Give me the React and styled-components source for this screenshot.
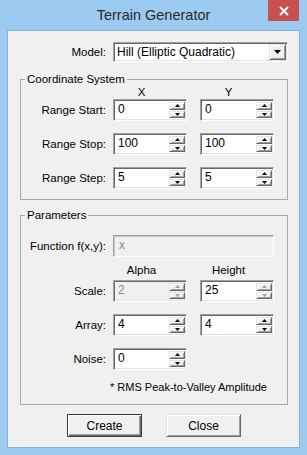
import React from 'react'
import styled, { createGlobalStyle, css } from 'styled-components'

const GlobalStyle = createGlobalStyle`
  html, body {
    margin: 0;
    padding: 0;
    background: #9ccaf1;
  }
  body {
    font-family: "Liberation Sans", Arial, sans-serif;
    font-size: 11.5px;
    color: #000;
  }
`

const sunken = css`
  border: 1px solid;
  border-color: #a0a0a0 #ffffff #ffffff #a0a0a0;
  box-shadow: inset 1px 1px 0 #696969, inset -1px -1px 0 #e3e3e3;
`

const raised = css`
  border: 1px solid;
  border-color: #e3e3e3 #696969 #696969 #e3e3e3;
  box-shadow: inset 1px 1px 0 #ffffff, inset -1px -1px 0 #a0a0a0;
  background: #f0f0f0;
`

const Arrow = ({ up, muted }) => (
  <svg width="5" height="3" viewBox="0 0 5 3">
    <polygon points={up ? '2.5,0 5,3 0,3' : '0,0 5,0 2.5,3'} fill={muted ? '#a0a0a0' : '#000'} />
  </svg>
)

const SpinBox = ({ value, disabled, lockArrows }) => (
  <Field $disabled={disabled}>
    <Value $disabled={disabled}>{value}</Value>
    <Spin>
      <SpinBtn>
        <Arrow up muted={disabled || lockArrows} />
      </SpinBtn>
      <SpinBtn>
        <Arrow muted={disabled || lockArrows} />
      </SpinBtn>
    </Spin>
  </Field>
)

const Row = ({ label, x, y }) => (
  <Cols>
    <Label>{label}</Label>
    <SpinBox {...x} />
    <SpinBox {...y} />
  </Cols>
)

const App = () => {
  return (
    <>
      <GlobalStyle />
      <Window>
        <TitleBar>
          <Title>Terrain Generator</Title>
          <CloseButton>
            <svg width="10" height="10" viewBox="0 0 10 10">
              <path d="M1 1 L9 9 M9 1 L1 9" stroke="#fff" strokeWidth="2" />
            </svg>
          </CloseButton>
        </TitleBar>

        <Client>
          <ModelRow>
            <Label>Model:</Label>
            <Combo>
              <ComboText>Hill (Elliptic Quadratic)</ComboText>
              <DropBtn>
                <svg width="7" height="4" viewBox="0 0 7 4">
                  <polygon points="0,0 7,0 3.5,4" fill="#000" />
                </svg>
              </DropBtn>
            </Combo>
          </ModelRow>

          <Group>
            <Legend>Coordinate System</Legend>
            <Cols>
              <span />
              <Head>X</Head>
              <Head>Y</Head>
            </Cols>
            <Rows>
              <Row label="Range Start:" x={{ value: '0' }} y={{ value: '0' }} />
              <Row label="Range Stop:" x={{ value: '100' }} y={{ value: '100' }} />
              <Row label="Range Step:" x={{ value: '5' }} y={{ value: '5' }} />
            </Rows>
          </Group>

          <Group $gap>
            <Legend>Parameters</Legend>
            <FuncRow>
              <Label>Function f(x,y):</Label>
              <TextField $disabled>x</TextField>
            </FuncRow>
            <Cols $top={7}>
              <span />
              <Head>Alpha</Head>
              <Head>Height</Head>
            </Cols>
            <Rows $top={3}>
              <Row label="Scale:" x={{ value: '2', disabled: true }} y={{ value: '25', lockArrows: true }} />
              <Row label="Array:" x={{ value: '4' }} y={{ value: '4' }} />
              <Cols>
                <Label>Noise:</Label>
                <SpinBox value="0" />
              </Cols>
            </Rows>
            <Note>* RMS Peak-to-Valley Amplitude</Note>
          </Group>

          <Buttons>
            <Button $default>Create</Button>
            <Button>Close</Button>
          </Buttons>
        </Client>
      </Window>
    </>
  )
}

export default App

const Window = styled.div`
  width: 307px;
  height: 455px;
  box-sizing: border-box;
  padding: 0 8px 8px;
  display: flex;
  flex-direction: column;
  background: #9ccaf1;
`

const TitleBar = styled.div`
  position: relative;
  height: 31px;
  display: flex;
  align-items: center;
  justify-content: center;
`

const Title = styled.div`
  font-size: 14.5px;
  color: #2b2b2b;
  margin-top: -1px;
`

const CloseButton = styled.div`
  position: absolute;
  top: 0;
  right: 0;
  width: 31px;
  height: 21px;
  background: #c75050;
  display: flex;
  align-items: center;
  justify-content: center;
`

const Client = styled.div`
  flex: 1;
  background: #f0f0f0;
  box-shadow: 0 0 0 1px #86b3da;
  padding: 11px 11px 0 12px;
  display: flex;
  flex-direction: column;
`

const Label = styled.div`
  text-align: right;
  white-space: nowrap;
`

const ModelRow = styled.div`
  display: grid;
  grid-template-columns: 86px 175px;
  column-gap: 7px;
  align-items: center;
  margin-bottom: 10px;
`

const Combo = styled.div`
  ${sunken};
  box-sizing: border-box;
  height: 20px;
  background: #fff;
  display: flex;
  align-items: center;
  padding: 0 1px 0 3px;
`

const ComboText = styled.div`
  flex: 1;
  font-size: 12px;
`

const DropBtn = styled.div`
  ${raised};
  box-sizing: border-box;
  width: 17px;
  height: 16px;
  display: flex;
  align-items: center;
  justify-content: center;
`

const Group = styled.fieldset`
  margin: ${(p) => (p.$gap ? '8px' : '0')} 0 0;
  padding: 0 0 10px;
  border: 1px solid #a9a9a9;
  min-width: 0;
  width: 268px;
  box-sizing: border-box;
`

const Legend = styled.legend`
  margin-left: 4px;
  padding: 0 2px;
  line-height: 14px;
`

const Cols = styled.div`
  display: grid;
  grid-template-columns: 85px 80px 74px;
  column-gap: 7px;
  align-items: center;
  margin-top: ${(p) => p.$top || 0}px;
`

const Head = styled.div`
  width: 57px;
  height: 13px;
  line-height: 13px;
  text-align: center;
`

const Rows = styled.div`
  display: flex;
  flex-direction: column;
  gap: 12px;
  margin-top: ${(p) => p.$top || 0}px;
`

const Field = styled.div`
  ${sunken};
  box-sizing: border-box;
  width: 74px;
  height: 22px;
  padding: 1px 1px 1px 4px;
  display: flex;
  align-items: center;
  background: ${(p) => (p.$disabled ? '#f0f0f0' : '#fff')};
`

const Value = styled.div`
  flex: 1;
  font-size: 12px;
  margin-top: -2px;
  color: ${(p) => (p.$disabled ? '#8a8a8a' : '#000')};
`

const Spin = styled.div`
  display: flex;
  flex-direction: column;
  gap: 1px;
  align-self: stretch;
  padding: 1px 0;
`

const SpinBtn = styled.div`
  ${raised};
  box-sizing: border-box;
  width: 16px;
  flex: 1;
  display: flex;
  align-items: center;
  justify-content: center;
`

const FuncRow = styled.div`
  display: grid;
  grid-template-columns: 85px 161px;
  column-gap: 7px;
  align-items: center;
  margin-top: 13px;
`

const TextField = styled.div`
  ${sunken};
  box-sizing: border-box;
  height: 22px;
  padding: 0 5px 2px;
  display: flex;
  align-items: center;
  font-size: 12px;
  background: ${(p) => (p.$disabled ? '#f0f0f0' : '#fff')};
  color: ${(p) => (p.$disabled ? '#8a8a8a' : '#000')};
  box-shadow: ${(p) => (p.$disabled ? 'inset 1px 1px 0 #c8c8c8' : 'inset 1px 1px 0 #696969')};
`

const Note = styled.div`
  margin: 10px 0 0 89px;
  line-height: 14px;
  font-size: 11px;
`

const Buttons = styled.div`
  display: flex;
  justify-content: center;
  gap: 24px;
  margin-top: 9px;
`

const Button = styled.button`
  ${raised};
  width: 75px;
  height: 23px;
  padding: 0;
  font-family: inherit;
  font-size: 12px;
  color: #000;
  ${(p) =>
    p.$default &&
    css`
      border-color: #3c3c3c;
      box-shadow: inset 1px 1px 0 #fff, inset -1px -1px 0 #696969, inset -2px -2px 0 #a0a0a0;
    `}
`
